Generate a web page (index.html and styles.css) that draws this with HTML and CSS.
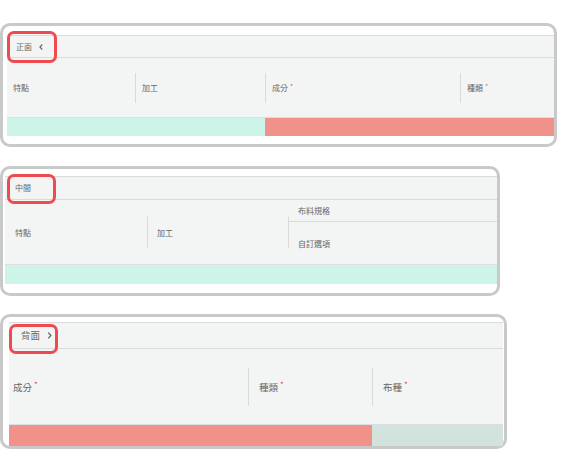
FILE: index.html
```html
<!DOCTYPE html>
<html lang="zh-Hant">
<head>
    <meta charset="UTF-8">
    <meta name="viewport" content="width=device-width, initial-scale=1.0">
    <title>版型區塊</title>
    <link rel="stylesheet" href="styles.css">
</head>
<body>
    <div class="page">
        <!-- 正面 -->
        <div class="frame frame-front">
            <div class="sheet">
                <div class="sheet-head">
                    <span class="tab">正面
                        <svg class="chev" width="4" height="6" viewBox="0 0 4 6"><path d="M3.3 0.5 L0.9 3 L3.3 5.5" fill="none" stroke="#666" stroke-width="1.1"/></svg>
                    </span>
                </div>
                <div class="sheet-row">
                    <div class="cell">特點</div>
                    <div class="cell">加工</div>
                    <div class="cell">成分<span class="req">*</span></div>
                    <div class="cell">種類<span class="req">*</span></div>
                </div>
                <div class="sheet-bar">
                    <div class="bar mint span-2"></div>
                    <div class="bar salmon span-2"></div>
                </div>
            </div>
        </div>

        <!-- 中間 -->
        <div class="frame frame-middle">
            <div class="sheet">
                <div class="sheet-head">
                    <span class="tab">中間</span>
                </div>
                <div class="sheet-row">
                    <div class="cell">特點</div>
                    <div class="cell">加工</div>
                    <div class="cell cell-nested">
                        <div class="sub sub-top">布料規格</div>
                        <div class="sub">自訂選項</div>
                    </div>
                </div>
                <div class="sheet-bar">
                    <div class="bar mint span-3"></div>
                </div>
            </div>
        </div>

        <!-- 背面 -->
        <div class="frame frame-back">
            <div class="sheet">
                <div class="sheet-head">
                    <span class="tab">背面
                        <svg class="chev" width="5" height="7" viewBox="0 0 5 7"><path d="M1.2 0.6 L3.9 3.5 L1.2 6.4" fill="none" stroke="#666" stroke-width="1.3"/></svg>
                    </span>
                </div>
                <div class="sheet-row">
                    <div class="cell">成分<span class="req">*</span></div>
                    <div class="cell">種類<span class="req">*</span></div>
                    <div class="cell">布種<span class="req">*</span></div>
                </div>
                <div class="sheet-bar">
                    <div class="bar salmon span-2"></div>
                    <div class="bar sage"></div>
                </div>
            </div>
        </div>
    </div>
</body>
</html>
```

FILE: styles.css
```css
body {
    margin: 0;
    background: #ffffff;
    font-family: "Noto Sans CJK TC", "Noto Sans", sans-serif;
    color: #666;
}
.page {
    display: flex;
    flex-direction: column;
    align-items: flex-start;
    padding-top: 23px;
}
.frame {
    position: relative;
    background: #fff;
    border: 3px solid #c9c9c9;
    border-radius: 10px;
    box-sizing: border-box;
}
.sheet {
    background: #f3f4f4;
    border-top: 1px solid #d9dbe0;
}
.sheet-head {
    position: relative;
    display: flex;
    align-items: center;
    border-bottom: 1px solid #d9dbe0;
}
.sheet-head::after {
    content: "";
    position: absolute;
    border: 3px solid #ef4a50;
    border-radius: 7px;
    box-sizing: border-box;
}
.tab {
    display: inline-flex;
    align-items: center;
    line-height: 1;
}
.chev {
    display: block;
}
.sheet-row,
.sheet-bar {
    display: grid;
}
.sheet-row {
    border-bottom: 1px solid #dcdee2;
}
.cell {
    position: relative;
    display: flex;
    align-items: center;
    white-space: nowrap;
}
.cell + .cell::before {
    content: "";
    position: absolute;
    left: 0;
    top: 50%;
    width: 1px;
    transform: translateY(-50%);
    background: #dadada;
}
.req {
    color: #ee4f55;
    font-size: 0.85em;
    line-height: 1;
    margin-left: 2px;
    position: relative;
    top: -1px;
}
.bar { height: 100%; }
.span-2 { grid-column: span 2; }
.span-3 { grid-column: span 3; }
.mint { background: #cdf4e8; }
.salmon { background: #f0928a; }
.sage { background: #d2e3de; }

/* 正面 */
.frame-front {
    width: 557px;
    padding: 9px 0 8px 4px;
    font-size: 8px;
}
.frame-front .sheet-head { height: 21px; padding-left: 9px; }
.frame-front .chev { margin-left: 7px; }
.frame-front .sheet-head::after { left: 0; top: -5px; width: 50px; height: 32px; }
.frame-front .sheet-row,
.frame-front .sheet-bar { grid-template-columns: 128px 130px 195px 94px; }
.frame-front .sheet-row { height: 59px; }
.frame-front .sheet-bar { height: 18px; }
.frame-front .cell { padding-left: 7px; }
.frame-front .cell:first-child { padding-left: 6px; }
.frame-front .cell::before { height: 30px; }

/* 中間 */
.frame-middle {
    width: 500px;
    margin-top: 19px;
    padding: 7px 0 9px 2px;
    font-size: 8px;
}
.frame-middle .sheet-head { height: 22px; padding-left: 10px; }
.frame-middle .sheet-head::after { left: 2px; top: -3px; width: 49px; height: 30px; }
.frame-middle .sheet-row,
.frame-middle .sheet-bar { grid-template-columns: 142px 141px 209px; }
.frame-middle .sheet-row { height: 64px; }
.frame-middle .sheet-bar { height: 19px; }
.frame-middle .cell { padding-left: 10px; }
.frame-middle .cell::before { height: 31px; }
.frame-middle .cell-nested {
    flex-direction: column;
    align-items: stretch;
    padding-left: 0;
}
.sub {
    flex: 1;
    display: flex;
    align-items: center;
    padding-left: 10px;
}
.sub-top {
    flex: 0 0 21px;
    border-bottom: 1px solid #d9dbe0;
}

/* 背面 */
.frame-back {
    width: 507px;
    margin-top: 18px;
    padding: 5px 1px 0 6px;
    font-size: 9.5px;
}
.frame-back .sheet-head { height: 25px; padding-left: 12px; }
.frame-back .chev { margin-left: 7px; }
.frame-back .sheet-head::after { left: 0; top: 1px; width: 49px; height: 30px; }
.frame-back .sheet-row,
.frame-back .sheet-bar { grid-template-columns: 239px 124px 131px; }
.frame-back .sheet-row { height: 75px; }
.frame-back .sheet-bar { height: 21px; }
.frame-back .cell { padding-left: 11px; }
.frame-back .cell:first-child { padding-left: 4px; }
.frame-back .cell::before { height: 38px; }
```
